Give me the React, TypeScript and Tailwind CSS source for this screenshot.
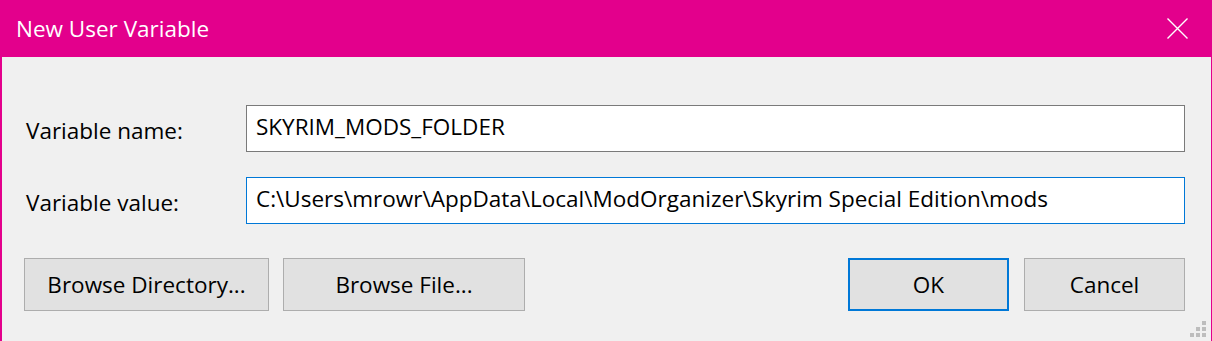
const font = { fontFamily: '"Open Sans", "Noto Sans", sans-serif' };

function Grip() {
  return (
    <div className="absolute bottom-[4px] right-[5px] grid grid-cols-3 gap-[2px]">
      <span className="h-[4px] w-[4px]" />
      <span className="h-[4px] w-[4px]" />
      <span className="h-[4px] w-[4px] bg-[#bdbdbd]" />
      <span className="h-[4px] w-[4px]" />
      <span className="h-[4px] w-[4px] bg-[#bdbdbd]" />
      <span className="h-[4px] w-[4px] bg-[#bdbdbd]" />
      <span className="h-[4px] w-[4px] bg-[#bdbdbd]" />
      <span className="h-[4px] w-[4px] bg-[#bdbdbd]" />
      <span className="h-[4px] w-[4px] bg-[#bdbdbd]" />
    </div>
  );
}

function CloseIcon() {
  return (
    <svg width="21" height="21" viewBox="0 0 21 21" className="text-white">
      <path d="M0.5 0.5 L20.5 20.5 M20.5 0.5 L0.5 20.5" stroke="currentColor" strokeWidth="1.4" fill="none" />
    </svg>
  );
}

export default function App() {
  return (
    <div
      className="relative flex h-[341px] w-[1212px] flex-col border-l-2 border-r border-[#e3008c] bg-[#f0f0f0] text-[22.5px] text-black"
      style={font}
    >
      {/* Title bar */}
      <div className="-ml-[2px] -mr-[1px] flex h-[57px] shrink-0 items-center justify-between bg-[#e3008c] pl-[16px] pr-[24px]">
        <span className="text-white">New User Variable</span>
        <CloseIcon />
      </div>

      {/* Fields */}
      <div className="flex flex-col gap-[25px] pl-[24px] pr-[26px] pt-[48px]">
        <div className="flex items-center">
          <label className="w-[220px] pt-[5px]">Variable name:</label>
          <div className="flex h-[47px] flex-1 items-center border border-[#7a7a7a] bg-white pl-[9px] pb-[3px]">
            SKYRIM_MODS_FOLDER
          </div>
        </div>
        <div className="flex items-center">
          <label className="w-[220px] pt-[5px]">Variable value:</label>
          <div className="flex h-[47px] flex-1 items-center border border-[#0078d7] bg-white pl-[9px] pb-[3px]">
            C:\Users\mrowr\AppData\Local\ModOrganizer\Skyrim Special Edition\mods
          </div>
        </div>
      </div>

      {/* Buttons */}
      <div className="flex items-center pl-[22px] pr-[26px] pt-[34px]">
        <button className="h-[53px] w-[245px] border border-[#adadad] bg-[#e1e1e1]">Browse Directory...</button>
        <button className="ml-[14px] h-[53px] w-[242px] border border-[#adadad] bg-[#e1e1e1]">Browse File...</button>
        <div className="flex-1" />
        <button className="h-[53px] w-[161px] border-2 border-[#0078d7] bg-[#e1e1e1]">OK</button>
        <button className="ml-[15px] h-[53px] w-[161px] border border-[#adadad] bg-[#e1e1e1]">Cancel</button>
      </div>

      <Grip />
    </div>
  );
}
